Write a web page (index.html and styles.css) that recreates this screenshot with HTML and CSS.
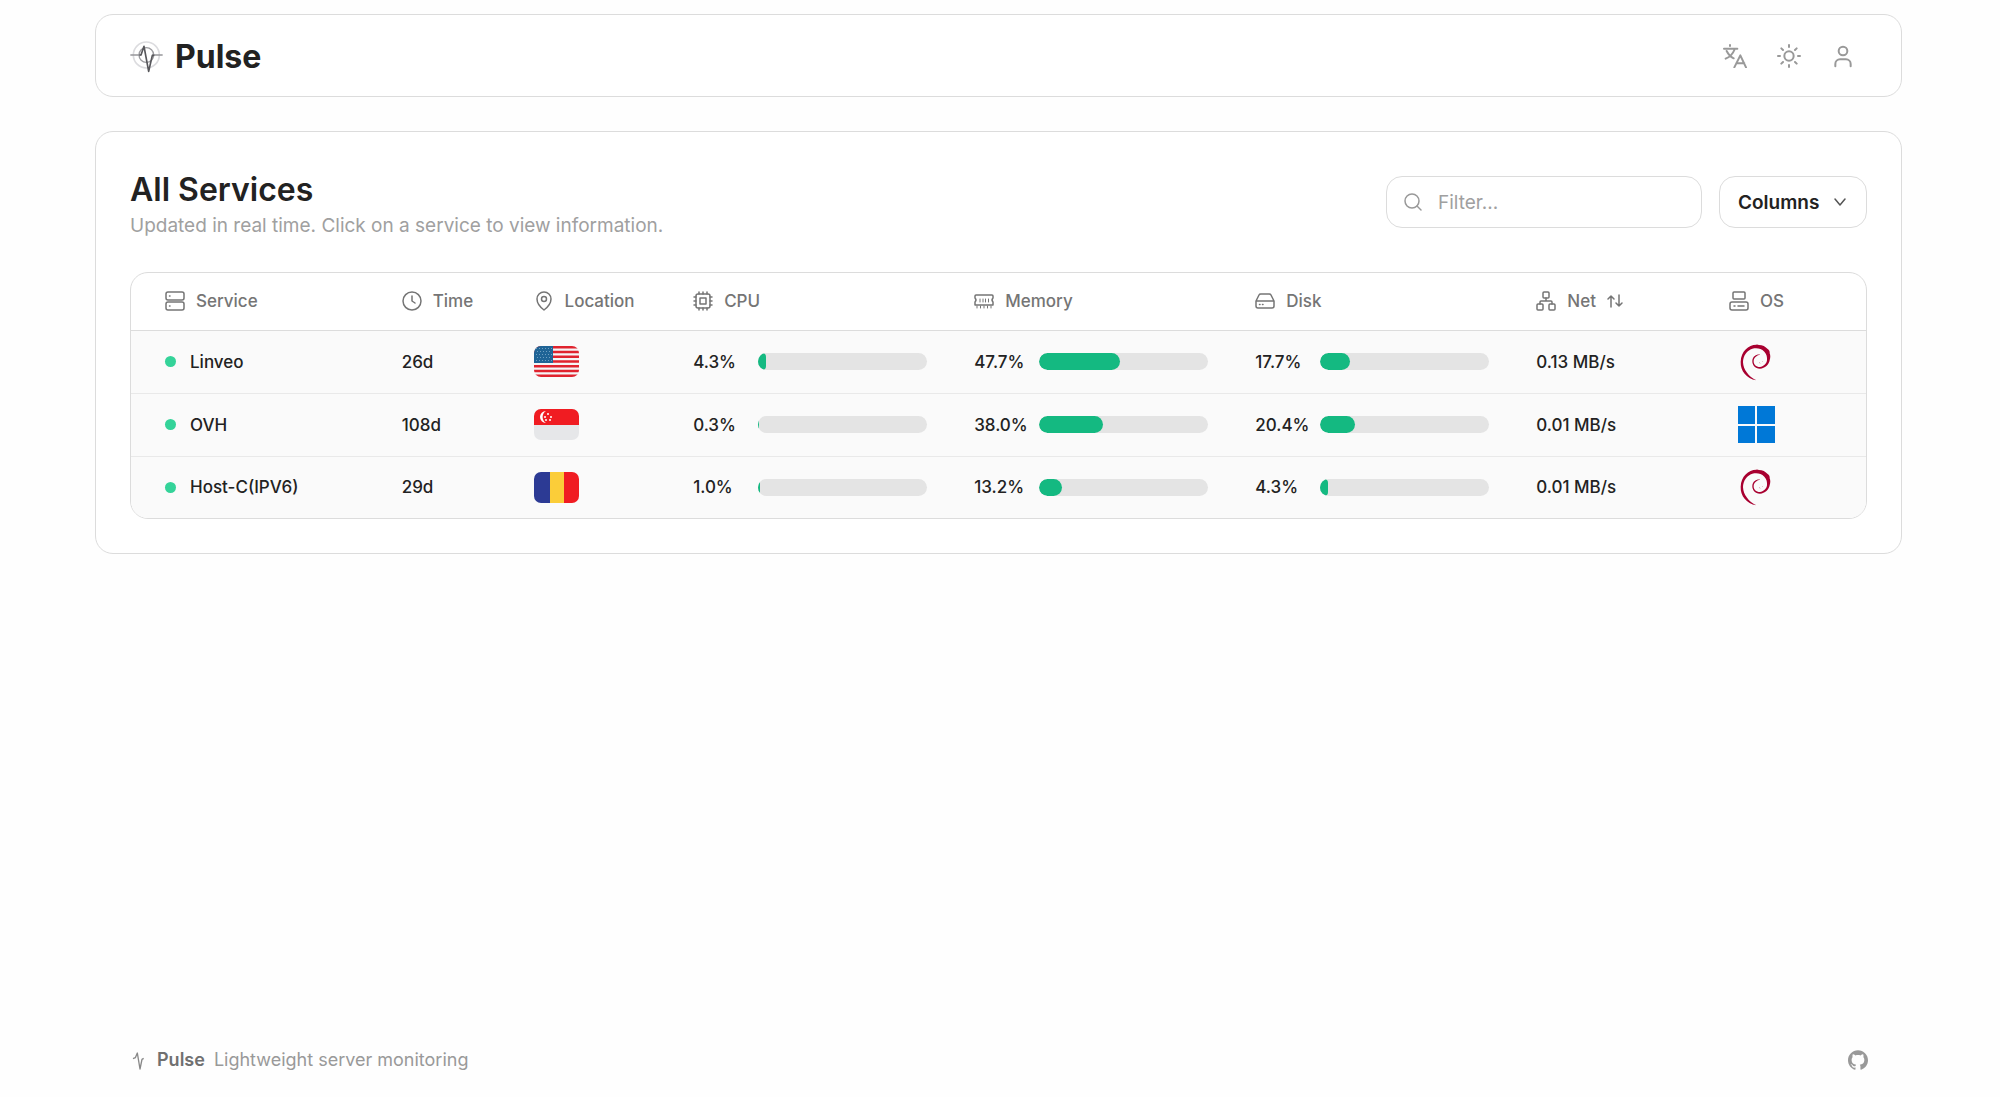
FILE: index.html
```html
<!DOCTYPE html>
<html lang="en">
<head>
  <meta charset="UTF-8" />
  <meta name="viewport" content="width=device-width, initial-scale=1.0" />
  <title>Pulse</title>
  <link rel="stylesheet" href="styles.css">
</head>
<body>
  <!-- shapes used more than once -->
  <svg class="defs" width="0" height="0" aria-hidden="true">
    <symbol id="debian" viewBox="0 0 114 114">
      <path fill="#a80030" d="M58 112C28 106 10 84 11 56 12 25 34 5 58 5c3-2 5 1 8 1 10 0 20 5 26 12 4 2 7 8 6 13 3 7 2 14 0 21C96 64 84 77 69 77 54 77 45 64 46 53c1-12 11-20 24-18-10 1-19 8-20 18-1 11 7 19 19 19 10-1 20-10 21-20 1-9-1-19-8-26C72 16 60 14 46 17 30 22 18 38 18 58c1 22 17 43 40 54z"/>
      <path fill="none" stroke="#a80030" stroke-width="1" d="M66 58l4 3M76 56l2-2"/>
    </symbol>
  </svg>

  <div class="page">
    <header class="card topbar">
      <a class="brand" href="#">
        <svg class="brand-logo" viewBox="0 0 99 99" fill="none">
          <circle cx="49" cy="45" r="39" stroke="#dcdcdf" stroke-width="5"/>
          <circle cx="49" cy="45" r="22" stroke="#9b9b9f" stroke-width="4"/>
          <path d="M1 45h32M67 45h31" stroke="#97979b" stroke-width="4"/>
          <path d="M28 45h5l9-26 14 75 11-48h6" stroke="#57575b" stroke-width="5" stroke-linejoin="round"/>
        </svg>
        <span>Pulse</span>
      </a>
      <nav class="actions">
        <button class="icon-btn" aria-label="Language">
          <svg viewBox="0 0 72 72"><path d="M21 3v3M3 14h40M34 18Q27 36 8 44M11 21Q19 37 32 43M34 70l18-36 17 36M40 58h24"/></svg>
        </button>
        <button class="icon-btn" aria-label="Theme">
          <svg viewBox="0 0 72 72"><circle cx="36" cy="36" r="14"/><path d="M36 3v6M36 63v6M3 36h6M63 36h6M13 13l5 5M54 54l5 5M13 59l5-5M54 18l5-5"/></svg>
        </button>
        <button class="icon-btn" aria-label="Account">
          <svg viewBox="0 0 72 72"><circle cx="36" cy="21" r="13"/><path d="M13 67v-7a14 14 0 0 1 14-14h18a14 14 0 0 1 14 14v7"/></svg>
        </button>
      </nav>
    </header>

    <main class="card services">
      <div class="services-head">
        <div class="heading">
          <h1>All Services</h1>
          <p>Updated in real time. Click on a service to view information.</p>
        </div>
        <div class="tools">
          <label class="filter">
            <svg viewBox="0 0 20 20"><circle cx="9" cy="9" r="7"/><path d="M14 14l4 4"/></svg>
            <input type="text" placeholder="Filter..." aria-label="Filter services">
          </label>
          <button class="columns-btn">
            Columns
            <svg viewBox="0 0 16 16"><path d="M3 5l5 6 5-6"/></svg>
          </button>
        </div>
      </div>

      <div class="table-wrap">
        <table>
          <colgroup>
            <col class="c-service">
            <col class="c-time">
            <col class="c-location">
            <col class="c-meter">
            <col class="c-meter">
            <col class="c-meter">
            <col class="c-net">
            <col class="c-os">
          </colgroup>
          <thead>
            <tr>
              <th><div class="th">
                <svg viewBox="0 0 20 20"><rect x="1" y="1" width="18" height="8" rx="2"/><rect x="1" y="11" width="18" height="8" rx="2"/><path d="M4.500 5h.5M4.500 15h.5"/></svg>
                Service</div></th>
              <th><div class="th">
                <svg viewBox="0 0 20 20"><circle cx="10" cy="10" r="9"/><path d="M10 5v5l3 2"/></svg>
                Time</div></th>
              <th><div class="th">
                <svg viewBox="0 0 20 20"><path d="M10 19C6 16 3 12 3 8a7 7 0 0 1 14 0c0 4-3 8-7 11z"/><circle cx="10" cy="8" r="2.500"/></svg>
                Location</div></th>
              <th><div class="th">
                <svg viewBox="0 0 20 20"><rect x="3" y="3" width="14" height="14" rx="2"/><rect x="7" y="7" width="6" height="6"/><path d="M6 1v2M10 1v2M14 1v2M6 17v2M10 17v2M14 17v2M1 6h2M1 10h2M1 14h2M17 6h2M17 10h2M17 14h2"/></svg>
                CPU</div></th>
              <th><div class="th">
                <svg viewBox="0 0 20 20"><path d="M2 4h16a1 1 0 0 1 1 1v2q-2 2 0 4v3H1v-3q2-2 0-4V5a1 1 0 0 1 1-1z"/><path class="thin" d="M6 8v3M9 8v3M11.500 8v3M14.500 8v3M3 15v2M6.500 15v2M10 15v2M13.500 15v2M17 15v2"/></svg>
                Memory</div></th>
              <th><div class="th">
                <svg viewBox="0 0 20 20"><path d="M1 10l3-6a2 2 0 0 1 2-1h8a2 2 0 0 1 2 1l3 6v5a2 2 0 0 1-2 2H3a2 2 0 0 1-2-2zM1 10h18M4.500 13.500h.5M7.500 13.500h.5"/></svg>
                Disk</div></th>
              <th><button class="th sort">
                <svg viewBox="0 0 20 20"><rect x="7" y="1" width="6" height="6" rx="1"/><rect x="1" y="13" width="6" height="6" rx="1"/><rect x="13" y="13" width="6" height="6" rx="1"/><path d="M10 7v3M4 13v-2q0-1 1-1h10q1 0 1 1v2"/></svg>
                Net
                <svg class="sort-arrows" viewBox="0 0 16 16"><path d="M4 14V3M1 6l3-3 3 3M12 2v11M9 10l3 3 3-3"/></svg>
              </button></th>
              <th><div class="th">
                <svg viewBox="0 0 20 20"><rect x="4" y="1" width="12" height="7" rx="1"/><rect x="1" y="11" width="18" height="8" rx="2"/><path d="M5 15h1M9 15h6"/></svg>
                OS</div></th>
            </tr>
          </thead>
          <tbody>
            <tr>
              <td><div class="name"><span class="dot"></span>Linveo</div></td>
              <td>26d</td>
              <td>
                <svg class="flag" viewBox="0 0 45 31" role="img" aria-label="United States">
                  <rect width="45" height="31" fill="#f5f5f6"/>
                  <path stroke="#e0232e" stroke-width="2.400" d="M0 1.200h45M0 6h45M0 10.700h45M0 15.500h45M0 20.300h45M0 25h45M0 29.800h45"/>
                  <rect width="19" height="17" fill="#1f6496"/>
                  <path stroke="#6fa0c2" stroke-width="1" stroke-dasharray="1 2" d="M2 2.500h16M3 5.500h15M2 8.500h16M3 11.500h15M2 14.500h16"/>
                </svg>
              </td>
              <td><div class="meter"><span>4.3%</span><div class="bar"><div class="fill" style="width: 4.9%"></div></div></div></td>
              <td><div class="meter"><span>47.7%</span><div class="bar"><div class="fill" style="width: 47.7%"></div></div></div></td>
              <td><div class="meter"><span>17.7%</span><div class="bar"><div class="fill" style="width: 17.7%"></div></div></div></td>
              <td>0.13 MB/s</td>
              <td><svg class="os" role="img" aria-label="Debian"><use href="#debian"/></svg></td>
            </tr>
            <tr>
              <td><div class="name"><span class="dot"></span>OVH</div></td>
              <td>108d</td>
              <td>
                <svg class="flag" viewBox="0 0 45 31" role="img" aria-label="Singapore">
                  <rect width="45" height="31" fill="#e6e7e9"/>
                  <rect width="45" height="16" fill="#f01c22"/>
                  <path fill="#fff" d="M12 2a6 6 0 1 0 0 12 7 7 0 0 1 0-12z"/>
                  <g fill="#fff"><circle cx="14" cy="5" r="1"/><circle cx="11" cy="8" r="1"/><circle cx="17" cy="8" r="1"/><circle cx="12" cy="11" r="1"/><circle cx="16" cy="11" r="1"/></g>
                </svg>
              </td>
              <td><div class="meter"><span>0.3%</span><div class="bar"><div class="fill" style="width: 0.5%"></div></div></div></td>
              <td><div class="meter"><span>38.0%</span><div class="bar"><div class="fill" style="width: 38%"></div></div></div></td>
              <td><div class="meter"><span>20.4%</span><div class="bar"><div class="fill" style="width: 20.4%"></div></div></div></td>
              <td>0.01 MB/s</td>
              <td><svg class="os" viewBox="0 0 38 38" role="img" aria-label="Windows"><path fill="#0078d7" d="M1 0h17v18H1zM20 0h18v18H20zM1 20h17v17H1zM20 20h18v17H20z"/></svg></td>
            </tr>
            <tr>
              <td><div class="name"><span class="dot"></span>Host-C(IPV6)</div></td>
              <td>29d</td>
              <td>
                <svg class="flag" viewBox="0 0 45 31" role="img" aria-label="Romania">
                  <rect width="16" height="31" fill="#2c3a94"/>
                  <rect x="16" width="14" height="31" fill="#fbcd39"/>
                  <rect x="30" width="15" height="31" fill="#f01c22"/>
                </svg>
              </td>
              <td><div class="meter"><span>1.0%</span><div class="bar"><div class="fill" style="width: 1%"></div></div></div></td>
              <td><div class="meter"><span>13.2%</span><div class="bar"><div class="fill" style="width: 13.2%"></div></div></div></td>
              <td><div class="meter"><span>4.3%</span><div class="bar"><div class="fill" style="width: 4.3%"></div></div></div></td>
              <td>0.01 MB/s</td>
              <td><svg class="os" role="img" aria-label="Debian"><use href="#debian"/></svg></td>
            </tr>
          </tbody>
        </table>
      </div>
    </main>

    <footer>
      <svg class="foot-logo" viewBox="0 0 54 60"><path d="M12 26l7-3 6-14 8 48 6-29 5-3"/></svg>
      <p><strong>Pulse</strong><span>Lightweight server monitoring</span></p>
      <a class="github" href="#" aria-label="GitHub">
        <svg viewBox="0 0 24 24"><path d="M12 .297c-6.63 0-12 5.373-12 12 0 5.303 3.438 9.8 8.205 11.385.6.113.82-.258.82-.577 0-.285-.01-1.04-.015-2.04-3.338.724-4.042-1.61-4.042-1.61C4.422 18.07 3.633 17.7 3.633 17.7c-1.087-.744.084-.729.084-.729 1.205.084 1.838 1.236 1.838 1.236 1.07 1.835 2.809 1.305 3.495.998.108-.776.417-1.305.76-1.605-2.665-.3-5.466-1.332-5.466-5.93 0-1.31.465-2.38 1.235-3.22-.135-.303-.54-1.523.105-3.176 0 0 1.005-.322 3.3 1.23.96-.267 1.98-.399 3-.405 1.02.006 2.04.138 3 .405 2.28-1.552 3.285-1.23 3.285-1.23.645 1.653.24 2.873.12 3.176.765.84 1.23 1.91 1.23 3.22 0 4.61-2.805 5.625-5.475 5.92.42.36.81 1.096.81 2.22 0 1.606-.015 2.896-.015 3.286 0 .315.21.69.825.57C20.565 22.092 24 17.592 24 12.297c0-6.627-5.373-12-12-12"/></svg>
      </a>
    </footer>
  </div>
</body>
</html>
```
FILE: styles.css
```css
* {
  box-sizing: border-box;
}
body {
  margin: 0;
  font-family: Inter, "Liberation Sans", sans-serif;
  background: #fefefe;
  color: #222;
}
svg {
  display: block;
  flex-shrink: 0;
}
.defs {
  position: absolute;
}
button {
  font: inherit;
  color: inherit;
  background: none;
  border: none;
  padding: 0;
  cursor: pointer;
}
.page {
  min-height: 100vh;
  padding: 14px 98px 24px 95px;
  display: flex;
  flex-direction: column;
  gap: 34px;
}
.card {
  border: 1px solid #dcdcdc;
  border-radius: 18px;
  background: #fff;
}

/* top bar */
.topbar {
  display: flex;
  justify-content: space-between;
  align-items: center;
  height: 83px;
  padding: 0 34px;
}
.brand {
  display: flex;
  align-items: center;
  gap: 12px;
  padding-top: 2px;
  color: #222;
  font-size: 32px;
  font-weight: 700;
  text-decoration: none;
}
.brand-logo {
  width: 33px;
  height: 33px;
}
.actions {
  display: flex;
  gap: 6px;
}
.icon-btn {
  width: 48px;
  height: 48px;
  display: grid;
  place-items: center;
}
.icon-btn svg {
  width: 24px;
  height: 24px;
  fill: none;
  stroke: #999;
  stroke-width: 6;
  stroke-linecap: round;
  stroke-linejoin: round;
}

/* services */
.services {
  padding: 34px;
}
.services-head {
  display: flex;
  justify-content: space-between;
  align-items: center;
  height: 72px;
  margin-bottom: 34px;
}
.heading {
  padding-top: 4px;
}
h1 {
  margin: 0;
  font-size: 32px;
  line-height: 44px;
  font-weight: 600;
}
.heading p {
  margin: 0;
  font-size: 19px;
  line-height: 28px;
  color: #a0a0a0;
}
.tools {
  display: flex;
  gap: 17px;
}
.filter {
  display: flex;
  align-items: center;
  gap: 15px;
  width: 316px;
  height: 52px;
  padding: 0 16px;
  border: 1px solid #dcdcdc;
  border-radius: 16px;
}
.filter svg {
  width: 20px;
  height: 20px;
  fill: none;
  stroke: #999;
  stroke-width: 1.5;
  stroke-linecap: round;
}
.filter input {
  flex: 1;
  min-width: 0;
  padding: 0;
  border: none;
  outline: none;
  background: none;
  font: inherit;
  font-size: 19px;
}
.filter input::placeholder {
  color: #a0a0a0;
}
.columns-btn {
  display: flex;
  align-items: center;
  justify-content: space-between;
  width: 148px;
  height: 52px;
  padding: 0 18px;
  border: 1px solid #dcdcdc;
  border-radius: 16px;
  font-size: 19px;
  font-weight: 600;
}
.columns-btn svg {
  width: 16px;
  height: 16px;
  fill: none;
  stroke: #555;
  stroke-width: 1.5;
  stroke-linecap: round;
  stroke-linejoin: round;
}

/* table */
.table-wrap {
  border: 1px solid #dcdcdc;
  border-radius: 18px;
  overflow: hidden;
}
table {
  width: 100%;
  table-layout: fixed;
  border-collapse: collapse;
  font-size: 17px;
}
.c-service { width: 15.6%; }
.c-time { width: 7.6%; }
.c-location { width: 9.2%; }
.c-meter { width: 16.2%; }
.c-net { width: 11.1%; }
.c-os { width: 7.9%; }
th, td {
  padding: 0;
  text-align: left;
}
th:first-child, td:first-child {
  padding-left: 34px;
}
th {
  height: 57px;
  border-bottom: 1px solid #dcdcdc;
  font-weight: 500;
  color: #757575;
}
td {
  height: 63px;
  font-weight: 500;
}
tbody tr {
  background: #fafafa;
  border-bottom: 1px solid #e9e9e9;
}
tbody tr:last-child {
  border-bottom: none;
}
tbody tr:last-child td {
  height: 62px;
}
.th {
  display: flex;
  align-items: center;
  gap: 11px;
}
.th svg {
  width: 20px;
  height: 20px;
  fill: none;
  stroke: #757575;
  stroke-width: 1.5;
  stroke-linecap: round;
  stroke-linejoin: round;
}
.th .thin {
  stroke-width: 1;
}
.th .sort-arrows {
  width: 16px;
  height: 16px;
}
.name {
  display: flex;
  align-items: center;
  gap: 14px;
}
.dot {
  width: 11px;
  height: 11px;
  border-radius: 50%;
  background: #34d399;
}
.flag {
  width: 45px;
  height: 31px;
  border-radius: 7px;
}
.meter {
  display: flex;
  align-items: center;
  padding-right: 47px;
}
.meter span {
  width: 65px;
}
.bar {
  flex: 1;
  height: 17px;
  border-radius: 9px;
  background: #e4e4e4;
  overflow: hidden;
}
.fill {
  height: 100%;
  border-radius: 9px;
  background: #14b981;
}
.os {
  width: 38px;
  height: 38px;
  margin-left: 8px;
}

/* footer */
footer {
  display: flex;
  align-items: center;
  gap: 10px;
  margin-top: auto;
  padding: 0 34px;
  font-size: 18px;
  line-height: 26px;
  color: #999;
}
footer p {
  display: flex;
  gap: 9px;
  margin: 0;
}
footer strong {
  font-weight: 600;
  color: #707070;
}
.foot-logo {
  width: 18px;
  height: 20px;
  fill: none;
  stroke: #888;
  stroke-width: 4;
  stroke-linejoin: round;
}
.github {
  margin-left: auto;
}
.github svg {
  width: 20px;
  height: 20px;
  fill: #999;
}
```
